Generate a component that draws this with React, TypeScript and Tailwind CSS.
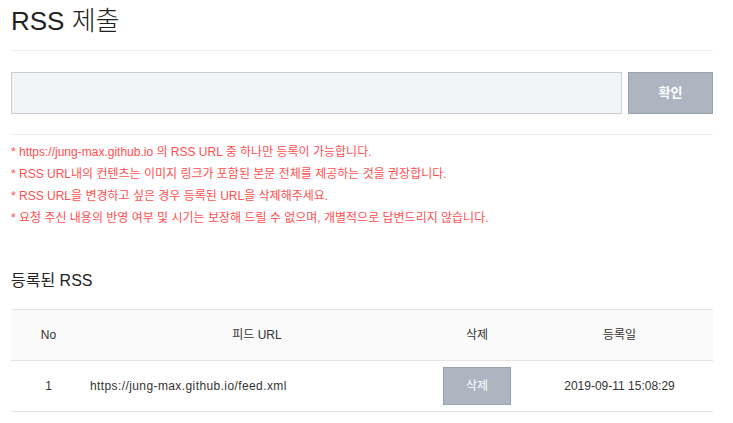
const NOTES = [
  '* https://jung-max.github.io 의 RSS URL 중 하나만 등록이 가능합니다.',
  '* RSS URL내의 컨텐츠는 이미지 링크가 포함된 본문 전체를 제공하는 것을 권장합니다.',
  '* RSS URL을 변경하고 싶은 경우 등록된 URL을 삭제해주세요.',
  '* 요청 주신 내용의 반영 여부 및 시기는 보장해 드릴 수 없으며, 개별적으로 답변드리지 않습니다.',
]

const FEEDS = [
  { no: 1, url: 'https://jung-max.github.io/feed.xml', createdAt: '2019-09-11 15:08:29' },
]

export default function App() {
  return (
    <div
      className="w-[733px] h-[423px] overflow-hidden bg-white pl-[11px] pr-[20px] text-[#333]"
      style={{ fontFamily: '"Liberation Sans", "Noto Sans CJK KR", sans-serif' }}
    >
      <h1 className="pt-[4px] h-[51px] text-[26px] font-light leading-[34px] text-[#222] border-b border-[#eeeeee]">
        RSS 제출
      </h1>

      <div className="flex gap-[6px] pt-[21px] pb-[20px] border-b border-[#eeeeee]">
        <input
          type="text"
          className="flex-1 h-[42px] bg-[#f3f4f6] border border-[#c9cfd6] outline-none px-3 text-sm"
        />
        <button className="w-[85px] h-[42px] bg-[#adb6c0] border border-[#98a2ad] text-white text-[13px] font-bold">
          확인
        </button>
      </div>

      <ul className="pt-[6px] text-[12px] leading-[22px] text-[#ff4f4f]">
        {NOTES.map((n) => (
          <li key={n}>{n}</li>
        ))}
      </ul>

      <h2 className="mt-[41px] text-[16px] leading-[22px] text-[#222]">등록된 RSS</h2>

      <table className="mt-[17px] w-full border-collapse text-[12px] text-[#333]">
        <thead>
          <tr className="h-[51px] bg-[#fafafa] border-y border-[#e5e5e5]">
            <th className="w-[75px] font-normal">No</th>
            <th className="w-[342px] font-normal">피드 URL</th>
            <th className="w-[98px] font-normal">삭제</th>
            <th className="font-normal">등록일</th>
          </tr>
        </thead>
        <tbody>
          {FEEDS.map((f) => (
            <tr key={f.no} className="h-[51px] border-b border-[#e5e5e5]">
              <td className="text-center">{f.no}</td>
              <td className="pl-[4px] tracking-[0.4px]">{f.url}</td>
              <td className="text-center">
                <button className="w-[68px] h-[38px] bg-[#adb6c0] border border-[#98a2ad] text-white text-[12px]">
                  삭제
                </button>
              </td>
              <td className="text-center">{f.createdAt}</td>
            </tr>
          ))}
        </tbody>
      </table>
    </div>
  )
}
